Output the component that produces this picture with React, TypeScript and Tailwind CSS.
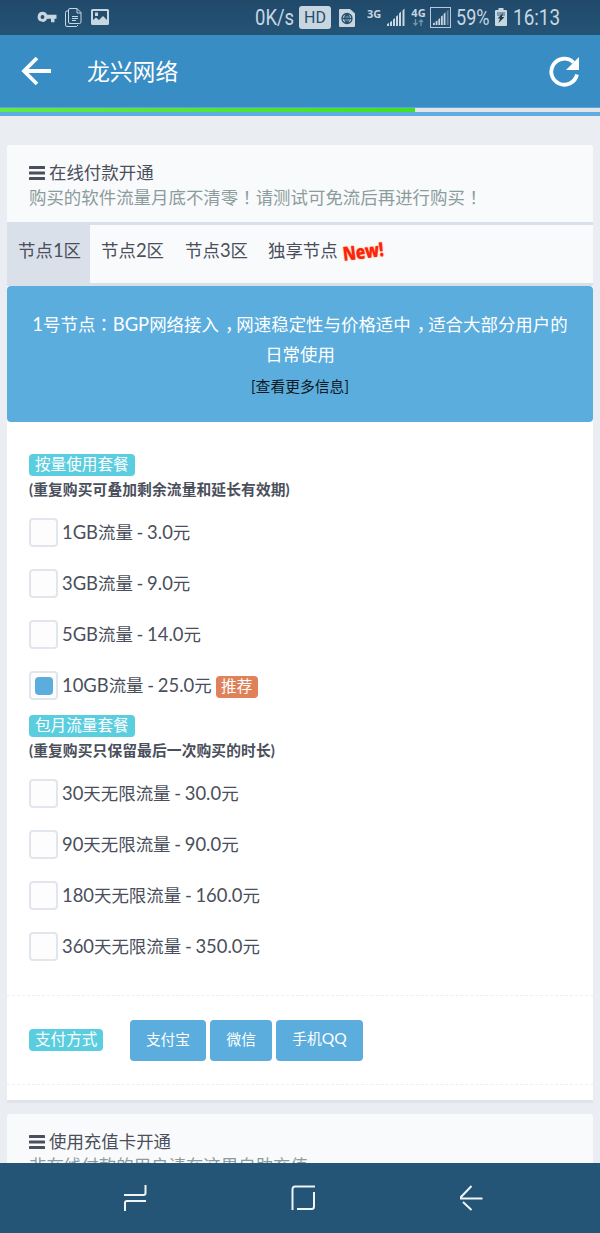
import type { ReactNode } from "react";

type Plan = { name: string; checked?: boolean; tag?: string };

const dataPlans: Plan[] = [
  { name: "1GB流量 - 3.0元" },
  { name: "3GB流量 - 9.0元" },
  { name: "5GB流量 - 14.0元" },
  { name: "10GB流量 - 25.0元", checked: true, tag: "推荐" },
];

const monthlyPlans: Plan[] = [
  { name: "30天无限流量 - 30.0元" },
  { name: "90天无限流量 - 90.0元" },
  { name: "180天无限流量 - 160.0元" },
  { name: "360天无限流量 - 350.0元" },
];

// Centred full-width punctuation
const P = ({ children }: { children: ReactNode }) => (
  <span className="font-['Noto_Sans_CJK_TC',sans-serif]">{children}</span>
);

// The comma sits on the baseline, in the middle of its box
const Comma = () => (
  <span className="inline-block w-[1em] pl-[.2em] text-center leading-none [font-feature-settings:'halt']">，</span>
);

// Latin runs are set a little larger than the Chinese around them
const Mixed = ({ text }: { text: string }) => (
  <>
    {text.split(/([\x20-\x7e]+)/).map((run, i) =>
      i % 2 ? (
        <span key={i} className="text-[18.400px] leading-none [word-spacing:-1px] whitespace-pre">{run}</span>
      ) : (
        run
      )
    )}
  </>
);

const Signal = () => (
  <svg className="h-[19px] w-[18px]" viewBox="0 0 18 19" fill="currentColor">
    <path d="M0 16l2-1v3H0zM3 14l2-1v5H3zM6 11.500l2-1.500v8H6zM9 8.500l2-1.500v11H9zM12 5.500l2-2v14.500h-2zM15.500 2.500l2-2v17.500h-2z" />
  </svg>
);

const StatusBar = () => (
  <div className="flex h-[35px] shrink-0 items-center bg-linear-to-b from-[#20496a] to-[#245476] pl-[37px] font-['Roboto',sans-serif] text-[#c8d6e0]">
    <svg className="h-5 w-5" viewBox="0 0 20 20">
      <path fill="currentColor" fillRule="evenodd" d="M5.500 4.500a5 5 0 1 0 4.700 7H14v3.500h3.500v-3.500h2v-4h-9.300A5 5 0 0 0 5.500 4.500zm0 3.300a1.900 1.900 0 1 1 0 3.800 1.900 1.900 0 0 1 0-3.800z" transform="translate(0 -.7)" />
    </svg>
    <svg className="mb-px ml-[8px] h-[19px] w-[17px]" viewBox="0 0 17 19" fill="none" stroke="currentColor">
      <path d="M3.500 3H2a1.500 1.500 0 0 0-1.500 1.500V17A1.500 1.500 0 0 0 2 18.500h9.500L13 17M5 .5h7l4 4V14a1.500 1.500 0 0 1-1.500 1.500H5A1.500 1.500 0 0 1 3.500 14V2A1.500 1.500 0 0 1 5 .5zM12 .5V5h4M7 8.500h6M7 10.500h6M7 12.500h4" />
    </svg>
    <svg className="mb-px ml-[9px] h-[18px] w-[18px]" viewBox="0 0 18 18">
      <path fill="currentColor" fillRule="evenodd" d="M1.500 1h15A1.500 1.500 0 0 1 18 2.500v13a1.500 1.500 0 0 1-1.500 1.500h-15A1.500 1.500 0 0 1 0 15.500v-13A1.500 1.500 0 0 1 1.500 1zM2 3v9l3-2.500 3 2.500 4-4 4 4V3zm2 1.500h3V8H4z" />
    </svg>
    <span className="ml-[146px] w-[40px] origin-left scale-x-[.84] whitespace-nowrap text-[22px]">0K/s</span>
    <span className="ml-[4px] flex h-[23px] w-[32px] items-center justify-center rounded-[3px] bg-[#c8d6e0] text-[16px] text-[#24506f]">HD</span>
    <svg className="ml-[8px] h-[18px] w-[16px]" viewBox="0 0 16 18">
      <path fill="currentColor" d="M1 0h10l5 4.500V17a1 1 0 0 1-1 1H1a1 1 0 0 1-1-1V1a1 1 0 0 1 1-1z" />
      <path fill="none" stroke="#24506f" strokeWidth="1.300" d="M8 4.500a5 5 0 1 0 0 10 5 5 0 0 0 0-10zM3 9.500h10M8 4.500v10M8 4.500c-3 3-3 7 0 10M8 4.500c3 3 3 7 0 10" />
    </svg>
    <span className="mb-[9px] ml-[12px] w-[14px] font-['Noto_Sans',sans-serif] text-[11px] leading-none font-bold">3G</span>
    <span className="ml-[6px]"><Signal /></span>
    <span className="mb-[2px] ml-[6px] flex w-[15px] flex-col items-center font-['Noto_Sans',sans-serif] text-[11px] leading-none font-bold">
      4G
      <svg className="mt-px h-[7px] w-[11px] text-[#7595aa]" viewBox="0 0 11 7" fill="none" stroke="currentColor" strokeWidth="1.300">
        <path d="M2.500 0v6M.5 4l2 2 2-2M8 7V1M6 3l2-2 2 2" />
      </svg>
    </span>
    <span className="mb-px ml-[4px] flex h-[21px] w-[21px] items-center justify-center border border-[#b8c8d4]">
      <svg className="h-[17px] w-[16px]" viewBox="0 0 18 19" fill="currentColor">
        <path d="M0 16l2-1v3H0zM3 14l2-1v5H3zM6 11.500l2-1.500v8H6zM9 8.500l2-1.500v11H9zM12 5.500l2-2v14.500h-2z" />
        <path opacity=".4" d="M15.500 2.500l2-2v17.500h-2z" />
      </svg>
    </span>
    <span className="ml-[5px] w-[34px] origin-left scale-x-[.82] whitespace-nowrap text-[22px]">59%</span>
    <svg className="mb-px ml-[5px] h-[18px] w-[12px]" viewBox="0 0 12 18">
      <path fill="currentColor" d="M3.500 0h5v2H11a1 1 0 0 1 1 1v14a1 1 0 0 1-1 1H1a1 1 0 0 1-1-1V3a1 1 0 0 1 1-1h2.500z" />
      <path fill="#7f9caf" d="M2 4h8v4H2z" />
      <path fill="#193b53" d="M8 5L2.500 10.500H5L3.500 15l6-6H7z" />
    </svg>
    <span className="ml-[6px] origin-left scale-x-[.86] whitespace-nowrap text-[22px]">16:13</span>
  </div>
);

const TitleBar = () => (
  <header className="shrink-0 bg-[#388dc5]">
    <div className="flex h-[72px] items-center pr-[20px] pl-[21px] text-white">
      <svg className="h-[30px] w-[31px]" viewBox="0 0 31 30" fill="none" stroke="currentColor" strokeWidth="3.800">
        <path d="M16 2L3 15l13 13M3 15h27" />
      </svg>
      <h1 className="ml-[35px] text-[22.800px] leading-none">龙兴网络</h1>
      <svg className="ml-auto h-[31px] w-[32px]" viewBox="0 0 32 31">
        <path fill="none" stroke="currentColor" strokeWidth="3.800" d="M25.500 6.500A13 13 0 1 0 29 18.500" />
        <path fill="currentColor" d="M31 1v13H18z" />
      </svg>
    </div>
    <div className="flex h-[5px] border-t border-[#5da5d5] bg-[#e2e4e8]">
      <div className="w-[415px] bg-linear-to-r from-[#62ea46] to-[#3fe022]" />
    </div>
    <div className="h-[4px] bg-[#5dade0]" />
  </header>
);

const Bars = () => (
  <svg className="h-[14px] w-[16px]" viewBox="0 0 16 14" fill="currentColor">
    <rect width="16" height="3" rx=".6" />
    <rect y="5.500" width="16" height="3" rx=".6" />
    <rect y="11" width="16" height="3" rx=".6" />
  </svg>
);

const CardHeader = ({ title, children }: { title: string; children: ReactNode }) => (
  <div className="h-[77px] rounded-t-[3px] bg-[#f9fafc] px-[22px] pt-[15px] text-[17.450px] leading-[25px]">
    <h2 className="flex items-center gap-[4px]">
      <Bars />
      {title}
    </h2>
    <p className="-mt-px whitespace-nowrap text-[#8c9c9d]">{children}</p>
  </div>
);

const Label = ({ children }: { children: ReactNode }) => (
  <span className="inline-flex h-[22px] items-center rounded-[4px] bg-[#5acddf] px-[6px] text-[15.600px] leading-none whitespace-nowrap text-white">
    {children}
  </span>
);

const PlanGroup = ({ label, note, plans }: { label: string; note: string; plans: Plan[] }) => (
  <div className="h-[261px]">
    <div className="flex h-[22px]"><Label>{label}</Label></div>
    <p className="mt-px h-[24px] text-[14.750px] leading-[24px] font-bold tracking-[.1px] whitespace-nowrap">{note}</p>
    <div className="pt-[6px]">
      {plans.map((plan) => (
        <label key={plan.name} className="flex h-[51px] items-center">
          <span className="flex h-[29px] w-[29px] items-center justify-center rounded-[4px] border-2 border-[#e1e6ec] bg-[#fdfdfe]">
            {plan.checked && <span className="h-[18px] w-[18px] rounded-[4px] bg-[#5badde]" />}
          </span>
          <span className="ml-[4px] text-[17.450px] leading-none whitespace-nowrap [font-kerning:none]">
            <Mixed text={plan.name} />
          </span>
          {plan.tag && (
            <span className="mt-[2px] ml-[4px] flex h-[22px] items-center rounded-[4px] bg-[#df8159] px-[5.500px] text-[15.600px] leading-none text-white">
              {plan.tag}
            </span>
          )}
        </label>
      ))}
    </div>
  </div>
);

const Tabs = () => (
  <nav className="flex h-[64px] border-y-[3px] border-[#dae0e9] bg-[#f9fafc] text-[17.450px] leading-[51px] whitespace-nowrap">
    <span className="w-[83px] bg-[#dae0e9] pl-[11px]"><Mixed text="节点1区" /></span>
    <span className="w-[84px] pl-[11px]"><Mixed text="节点2区" /></span>
    <span className="w-[83px] pl-[11px]"><Mixed text="节点3区" /></span>
    <span className="flex pl-[11px]">
      独享节点
      <span className="mt-[17px] ml-[5px] h-[24px] origin-left scale-x-[.8] -rotate-[7deg] font-['Open_Sans',sans-serif] text-[19.500px] leading-[24px] font-extrabold tracking-[-.3px] text-[#fb2410] [text-shadow:0_0_2px_#ffb36b]">
        New!
      </span>
    </span>
  </nav>
);

const PayButton = ({ children }: { children: ReactNode }) => (
  <button className="h-[41px] rounded-[4px] bg-[#5badde] px-[16px] pb-[2px] text-[14.700px] leading-none text-white [font-kerning:none]">
    {children}
  </button>
);

const NavBar = () => (
  <div className="flex h-[70px] shrink-0 items-center bg-[#245476] pl-[123px] text-[#f0f4f7]">
    <svg className="h-[28px] w-[24px]" viewBox="0 0 24 28" fill="none" stroke="currentColor" strokeWidth="2">
      <path d="M22.500 1v8a2 2 0 0 1-2 2H1M2 27v-8a2 2 0 0 1 2-2h19" />
    </svg>
    <svg className="ml-[143px] h-[28px] w-[26px]" viewBox="0 0 26 28" fill="none" stroke="currentColor" strokeWidth="2">
      <path d="M2.500 26V5a2.500 2.500 0 0 1 2.500-2.500h20M24 8v14.500a2.500 2.500 0 0 1-2.500 2.500H7" />
    </svg>
    <svg className="ml-[143px] h-[28px] w-[26px]" viewBox="0 0 26 28" fill="none" stroke="currentColor" strokeWidth="2">
      <path d="M12.500 2L2 13v1.500h21.500M4 18l8.500 8" />
    </svg>
  </div>
);

const App = () => {
  return (
    <div className="flex h-[1233px] w-[600px] flex-col overflow-hidden bg-[#eaedf1] font-['Lato','Noto_Sans_CJK_SC',sans-serif] text-[#4a4f5b]">
      <StatusBar />
      <TitleBar />
      <main className="min-h-0 flex-1 overflow-hidden px-[7px] pt-[29px]">
        <section className="h-[958px] rounded-t-[3px] border-b-[3px] border-[#dfe3ea] bg-white">
          <CardHeader title="在线付款开通">
            购买的软件流量月底不清零<P>！</P>请测试可免流后再进行购买<P>！</P>
          </CardHeader>
          <Tabs />
          <div className="h-[136px] rounded-[4px] bg-[#5badde] px-[22px] pt-[23px] text-center text-[17.450px] leading-[30px] whitespace-nowrap text-white [font-kerning:none]">
            <Mixed text="1号节点" /><P>：</P><Mixed text="BGP网络接入" /><Comma />网速稳定性与价格适中<Comma />适合大部分用户的
            <br />
            日常使用
            <p className="text-[14.800px] leading-[32px] text-[#111820]">[查看更多信息]</p>
          </div>
          <div className="h-[574px] border-b border-dashed border-[#eceef0] px-[22px] pt-[32px]">
            <PlanGroup label="按量使用套餐" note="(重复购买可叠加剩余流量和延长有效期)" plans={dataPlans} />
            <PlanGroup label="包月流量套餐" note="(重复购买只保留最后一次购买的时长)" plans={monthlyPlans} />
          </div>
          <div className="flex h-[89px] items-center border-b border-dashed border-[#eceef0] pl-[22px]">
            <Label>支付方式</Label>
            <div className="ml-[26.500px] flex gap-[4.500px]">
              <PayButton>支付宝</PayButton>
              <PayButton>微信</PayButton>
              <PayButton>
                手机<span className="text-[15.500px]">QQ</span>
              </PayButton>
            </div>
          </div>
        </section>
        <section className="mt-[11px]">
          <CardHeader title="使用充值卡开通">非在线付款的用户请在这里自助充值</CardHeader>
        </section>
      </main>
      <NavBar />
    </div>
  );
};

export default App;
